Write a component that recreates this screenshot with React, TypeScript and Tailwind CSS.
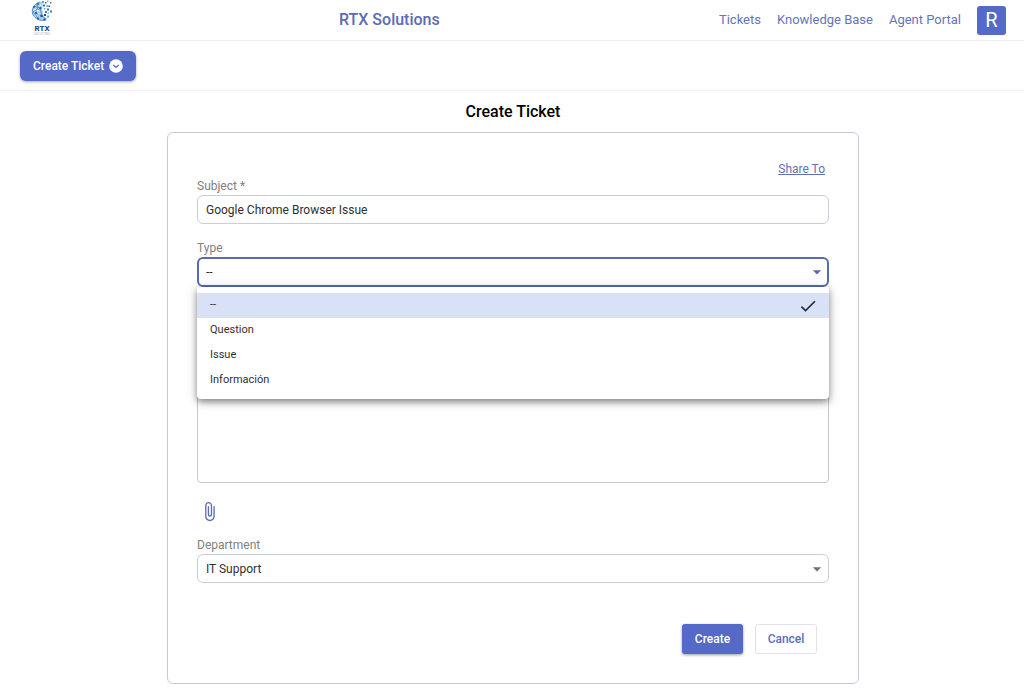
import { useState } from "react";
import { MdArrowDropDown, MdAttachFile, MdCheck } from "react-icons/md";

const ticketTypes = ["--", "Question", "Issue", "Información"];

const navLinks = ["Tickets", "Knowledge Base", "Agent Portal"];

// x, y, size, color of the loose squares on the right of the globe
const pixels = [
  [11, 1, 2, "#5fa3d6"],
  [14, 2, 1.5, "#2f6cb0"],
  [16, 0.5, 1.5, "#7fb6e0"],
  [19, 2, 1.5, "#3f7fbf"],
  [12, 4.5, 2, "#2f6cb0"],
  [15, 5, 2, "#8dbfe3"],
  [17.5, 5.5, 1.5, "#1d4f91"],
  [13, 8, 1.5, "#5fa3d6"],
  [16, 8.5, 2, "#2f6cb0"],
  [14, 11, 2, "#3f7fbf"],
  [19, 10.5, 2, "#3f7fbf"],
  [16.5, 12.5, 1.5, "#7fb6e0"],
  [13, 14, 2, "#1d4f91"],
  [16, 15.5, 2, "#5fa3d6"],
] as const;

function Logo() {
  return (
    <svg className="h-10 w-[22px]" viewBox="0 0 22 40" aria-label="RTX Solutions logo" role="img">
      <path d="M12 1.8A9.6 9.6 0 1 0 16.5 19Q12 17 11.5 11Q11 5 12 1.8Z" fill="#a9cfea" />
      <path
        d="M9 2.2A9.3 9.3 0 0 0 2 15M2 15Q7 22 15 20M3 6L9 8L5 13L11 16L15 19M6 4L6.5 9L2 12L7 18M9 8L11 16"
        fill="none"
        stroke="#4a86c2"
        strokeWidth="0.8"
      />
      <g fill="#1d4f91">
        <circle cx="7" cy="4" r="0.9" />
        <circle cx="3" cy="7" r="0.9" />
        <circle cx="9.5" cy="8" r="1" />
        <circle cx="5" cy="13" r="1" />
        <circle cx="10.5" cy="16" r="1.2" />
        <circle cx="7" cy="18.5" r="1" />
        <circle cx="13.5" cy="19.5" r="1.1" />
      </g>
      <g fill="#fff">
        <circle cx="7" cy="11" r="1" />
        <circle cx="4" cy="9.8" r="0.7" />
        <circle cx="8" cy="14" r="0.8" />
        <circle cx="9.5" cy="5.3" r="0.8" />
        <circle cx="4" cy="16" r="0.6" />
      </g>
      {pixels.map(([x, y, size, fill]) => (
        <rect key={`${x}-${y}`} x={x} y={y} width={size} height={size} fill={fill} />
      ))}
      <text x="11" y="30.5" textAnchor="middle" fontSize="8" fontWeight="700" fill="#1c3f7c">RTX</text>
      <text x="11" y="34.5" textAnchor="middle" fontSize="3" fill="#a9b4c8">SOLUTIONS</text>
    </svg>
  );
}

const labelClass = "block h-[18px] text-xs leading-[18px] text-[#808080]";
const fieldClass = "w-full appearance-none border bg-white px-2 text-xs text-[#303030] outline-none";

export default function App() {
  const [subject, setSubject] = useState("Google Chrome Browser Issue");
  const [type, setType] = useState("--");
  const [menuOpen, setMenuOpen] = useState(true);

  const pickType = (value: string) => {
    setType(value);
    setMenuOpen(false);
  };

  return (
    <div className="min-h-screen bg-white font-[Roboto,sans-serif] text-black">
      {/* Header */}
      <header className="flex h-[41px] items-center border-b border-[#eeeeee] pr-[18px] pl-[31px] text-[#5c6bb5]">
        <div className="w-[308px] shrink-0">
          <Logo />
        </div>
        <span className="text-base font-medium">RTX Solutions</span>
        <nav className="ml-auto flex items-center gap-4 text-[13px]">
          {navLinks.map((link) => (
            <a key={link} href="#" className="text-[#6374bd]">
              {link}
            </a>
          ))}
          <button className="size-[29px] rounded-[3px] bg-[#5569c8] text-xl leading-none text-white" aria-label="Account">
            R
          </button>
        </nav>
      </header>

      {/* Toolbar */}
      <div className="flex h-[50px] items-center border-b border-[#f3f3f3] px-5">
        <button className="flex h-[30px] items-center gap-[5px] rounded-md bg-[#5569c8] px-[13px] text-xs font-medium text-white shadow-[0_1px_3px_rgba(0,0,0,0.35)]">
          Create Ticket
          <svg className="size-[14px]" viewBox="0 0 14 14">
            <circle cx="7" cy="7" r="6.8" fill="#fff" />
            <path d="M4.3 5.9L7 8.4L9.7 5.9" fill="none" stroke="#5569c8" strokeWidth="1.4" />
          </svg>
        </button>
      </div>

      <div className="pl-0.5">
        <main className="mx-auto w-full max-w-[692px] pb-4">
          <h1 className="pt-[9px] text-center text-base leading-6 font-medium">Create Ticket</h1>

          <form className="mt-2 rounded-md border border-[#c5cad8] px-[29px] pt-[28px] pb-[29px]" onSubmit={(e) => e.preventDefault()}>
            <div className="flex h-4 items-center justify-end pr-1">
              <a href="#" className="text-xs text-[#6272b5] underline">
                Share To
              </a>
            </div>

            <label htmlFor="subject" className={labelClass}>Subject *</label>
            <input
              id="subject"
              value={subject}
              onChange={(e) => setSubject(e.target.value)}
              className={`${fieldClass} h-[29px] rounded-md border-[#c8cede]`}
            />

            {/* Type select with its open menu */}
            <div className="relative mt-[15px]">
              <label htmlFor="type" className={labelClass}>Type</label>
              <div className="relative">
                <select
                  id="type"
                  value={type}
                  onChange={(e) => setType(e.target.value)}
                  className="h-[30px] w-full appearance-none rounded-md border-2 border-[#576bb0] bg-white px-[7px] text-xs text-[#303030] outline-none"
                >
                  {ticketTypes.map((t) => (
                    <option key={t}>{t}</option>
                  ))}
                </select>
                <MdArrowDropDown className="pointer-events-none absolute top-[5px] right-[2px] size-5 text-[#576bb0]" />
              </div>

              {menuOpen && (
                <div role="listbox" aria-label="Type" className="absolute top-full left-0 z-10 w-full rounded-b-sm bg-white py-1.5 shadow-[0_3px_6px_rgba(0,0,0,0.4),0_2px_14px_rgba(0,0,0,0.16)]">
                  {ticketTypes.map((t) => (
                    <button
                      key={t}
                      type="button"
                      role="option"
                      aria-selected={t === type}
                      onClick={() => pickType(t)}
                      className={`flex h-[25px] w-full items-center justify-between pr-[11px] pl-[13px] text-[11px] text-[#303030] ${t === type ? "bg-[#d9e1f6]" : ""}`}
                    >
                      {t}
                      {t === type && <MdCheck className="size-5 text-[#22263c]" />}
                    </button>
                  ))}
                </div>
              )}
            </div>

            <textarea
              aria-label="Description"
              className={`${fieldClass} mt-[33px] block h-[163px] resize-none rounded-sm border-[#c8c8d0] py-2`}
            />

            <button type="button" aria-label="Attach a file" className="mt-[18px] ml-[2px] block text-[#5c6bb5]">
              <MdAttachFile className="size-[21px]" />
            </button>

            <div className="mt-[14px]">
              <label htmlFor="department" className={labelClass}>Department</label>
              <div className="relative">
                <select id="department" className={`${fieldClass} h-[29px] rounded-md border-[#c8cede]`}>
                  <option>IT Support</option>
                  <option>Sales</option>
                </select>
                <MdArrowDropDown className="pointer-events-none absolute top-[5px] right-[2px] size-5 text-[#707070]" />
              </div>
            </div>

            <div className="mt-[41px] flex justify-end gap-3 pr-3 text-xs font-medium">
              <button type="submit" className="h-[30px] w-[61px] rounded-[3px] bg-[#5569c8] text-white shadow-[0_1px_3px_rgba(0,0,0,0.4)]">
                Create
              </button>
              <button type="button" className="h-[30px] w-[62px] rounded-[3px] border border-[#e2e2e8] text-[#5c6dbd]">
                Cancel
              </button>
            </div>
          </form>
        </main>
      </div>
    </div>
  );
}
